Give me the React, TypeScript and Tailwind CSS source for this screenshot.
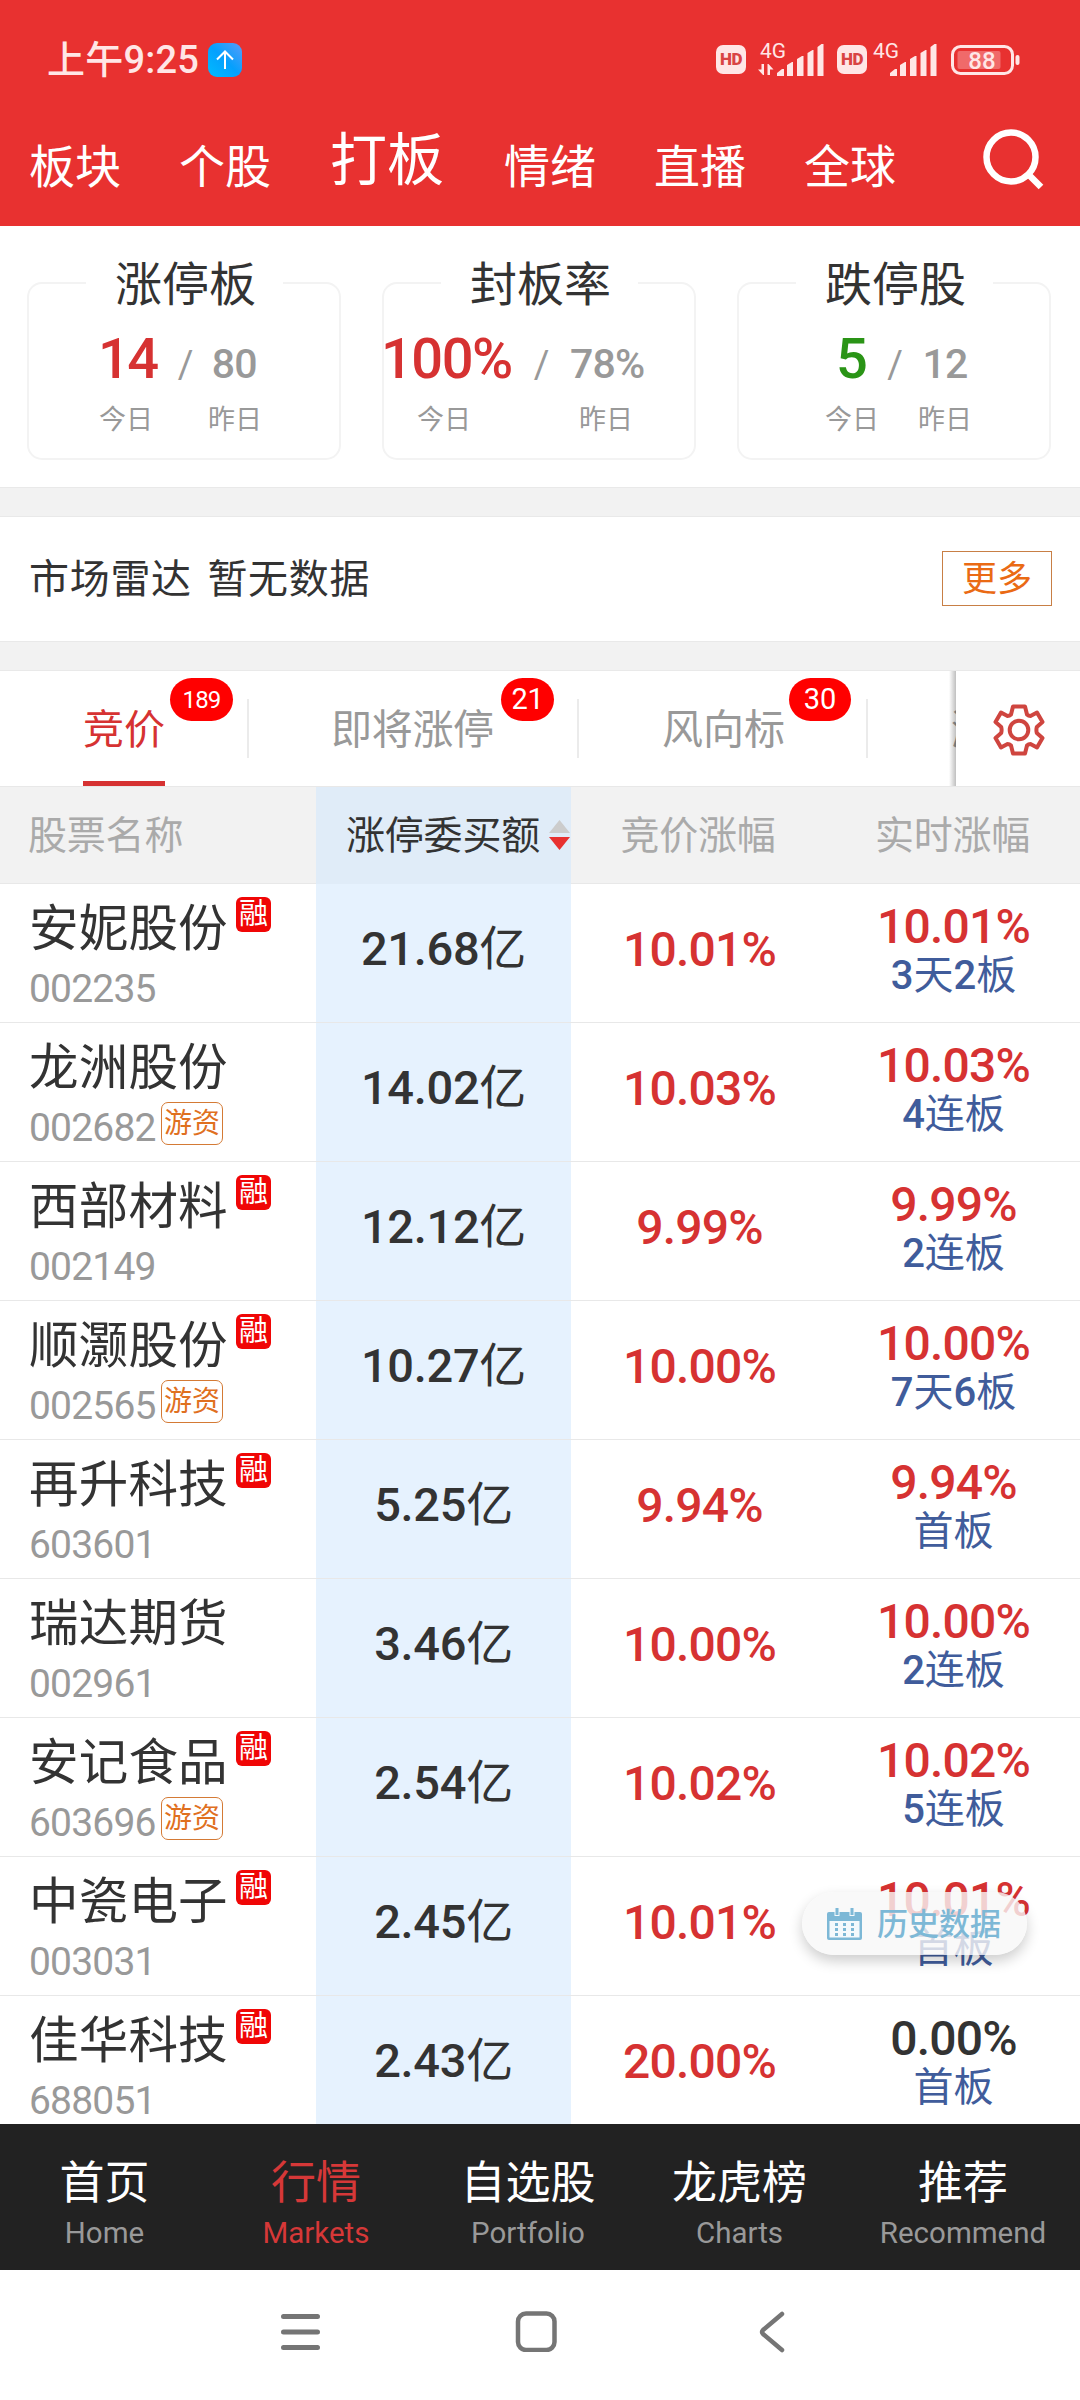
import clsx from 'clsx';

interface Stock {
  name: string;
  code: string;
  margin?: boolean;
  hotMoney?: boolean;
  amount: string;
  auction: string;
  realtime: string;
  flat?: boolean;
  streak: string;
}

const stocks: Stock[] = [
  { name: '安妮股份', code: '002235', margin: true, amount: '21.68亿', auction: '10.01%', realtime: '10.01%', streak: '3天2板' },
  { name: '龙洲股份', code: '002682', hotMoney: true, amount: '14.02亿', auction: '10.03%', realtime: '10.03%', streak: '4连板' },
  { name: '西部材料', code: '002149', margin: true, amount: '12.12亿', auction: '9.99%', realtime: '9.99%', streak: '2连板' },
  { name: '顺灏股份', code: '002565', margin: true, hotMoney: true, amount: '10.27亿', auction: '10.00%', realtime: '10.00%', streak: '7天6板' },
  { name: '再升科技', code: '603601', margin: true, amount: '5.25亿', auction: '9.94%', realtime: '9.94%', streak: '首板' },
  { name: '瑞达期货', code: '002961', amount: '3.46亿', auction: '10.00%', realtime: '10.00%', streak: '2连板' },
  { name: '安记食品', code: '603696', margin: true, hotMoney: true, amount: '2.54亿', auction: '10.02%', realtime: '10.02%', streak: '5连板' },
  { name: '中瓷电子', code: '003031', margin: true, amount: '2.45亿', auction: '10.01%', realtime: '10.01%', streak: '首板' },
  { name: '佳华科技', code: '688051', margin: true, amount: '2.43亿', auction: '20.00%', realtime: '0.00%', flat: true, streak: '首板' },
];

const navItems = [
  { label: '首页', sub: 'Home', width: 'w-[209px]' },
  { label: '行情', sub: 'Markets', width: 'w-[214px]', active: true },
  { label: '自选股', sub: 'Portfolio', width: 'w-[210px]' },
  { label: '龙虎榜', sub: 'Charts', width: 'w-[213px]' },
  { label: '推荐', sub: 'Recommend', width: 'w-[234px]' },
];

// digits are medium, hanzi stay regular
function Mixed({ text }: { text: string }) {
  return (
    <>
      {text.split(/([\d.%]+)/).filter(Boolean).map((part, i) => (
        <span key={i} className={/^[\d.%]/.test(part) ? 'font-medium' : 'font-normal'}>
          {part}
        </span>
      ))}
    </>
  );
}

function Signal({ arrows }: { arrows?: boolean }) {
  return (
    <svg className="w-[66px] h-[36px] overflow-visible" viewBox="0 0 66 36" fill="#ffe6e6">
      <text x="0" y="18" fontSize="21" textLength="26" lengthAdjust="spacingAndGlyphs">4G</text>
      {arrows && <path d="M-2 29.500h3.500V24H4v11H3zM7.500 24h1l5 5.500H10V35H7.500z" />}
      <path d="M17 36v-3l5-4h2v7zM27 36V25l5-3h1v14zM37 36V19l5-3h1.500v20zM47.500 36V13l5-3h1v26zM57.500 36V7l4-3h2v32z" />
    </svg>
  );
}

function Hd() {
  return (
    <div className="w-[30px] h-[29px] rounded-[7px] bg-[#ffe6e6] flex items-center justify-center text-[#d94444] text-[17px] font-black leading-none tracking-[-0.5px]">
      HD
    </div>
  );
}

function StatusBar() {
  return (
    <div className="h-[118px] flex items-start">
      <div className="flex items-center h-[38px] mt-[41px] ml-[47px] text-[#ffe6e6]">
        <span className="text-[38px] leading-none font-medium tracking-[0.2px] w-[161px] whitespace-nowrap">上午9:25</span>
        <svg className="w-[34px] h-[34px]" viewBox="0 0 34 34">
          <defs>
            <linearGradient id="up" x1="0" y1="1" x2="1" y2="0">
              <stop offset="0" stopColor="#00bcff" />
              <stop offset="0.5" stopColor="#05a0fd" />
              <stop offset="1" stopColor="#5a9cf8" />
            </linearGradient>
          </defs>
          <rect width="34" height="34" rx="9" fill="url(#up)" />
          <path d="M17 26V9M9 16.500l8-8 8 8" fill="none" stroke="#fff" strokeWidth="2" />
        </svg>
      </div>
      <div className="flex items-start ml-auto mr-[60px] mt-[40px]">
        <div className="pt-[5px]"><Hd /></div>
        <div className="ml-[14px]"><Signal arrows /></div>
        <div className="ml-[11px] pt-[5px]"><Hd /></div>
        <div className="ml-[6px]"><Signal /></div>
        <svg className="w-[69px] h-[30px] mt-[5px] ml-[12px]" viewBox="0 0 69 30">
          <rect x="1.500" y="1.500" width="60" height="27" rx="8" fill="none" stroke="#ffe6e6" strokeWidth="3" />
          <rect x="6.500" y="6" width="43" height="18" rx="2" fill="#f06a6a" />
          <rect x="64.500" y="10" width="4" height="10" rx="2" fill="#ffe6e6" />
          <text x="31" y="24" textAnchor="middle" fontSize="24" fontWeight="500" fill="#ffe6e6">88</text>
        </svg>
      </div>
    </div>
  );
}

function TopTabs() {
  return (
    <div className="h-[108px] flex items-start pl-[29px] text-white text-[46px] leading-[46px] whitespace-nowrap">
      <span className="w-[150px] pt-[26px]">板块</span>
      <span className="w-[151px] pt-[26px]">个股</span>
      <span className="w-[174px] pt-[14px] text-[57px] leading-[57px]">打板</span>
      <span className="w-[150px] pt-[26px]">情绪</span>
      <span className="w-[150px] pt-[26px]">直播</span>
      <span className="w-[178px] pt-[26px]">全球</span>
      <svg className="w-[62px] h-[62px] mt-[10px]" viewBox="0 0 62 62" fill="none" stroke="#fff" strokeWidth="6.500">
        <circle cx="29" cy="29" r="24.500" />
        <path d="M46.500 46.500L59 59" />
      </svg>
    </div>
  );
}

interface SummaryProps {
  title: string;
  today: string;
  yesterday: string;
  down?: boolean;
  layout: string;
  labels: string;
}

function SummaryCard({ title, today, yesterday, down, layout, labels }: SummaryProps) {
  return (
    <div className="w-[314px] h-[178px] border-2 border-[#f3f3f3] rounded-[15px] shrink-0">
      <div className="w-[197px] h-[50px] -mt-[24px] mx-auto pl-[3px] bg-white text-center text-[47px] leading-[50px] text-[#333] whitespace-nowrap">
        {title}
      </div>
      <div className={clsx('flex items-baseline mt-[21px] h-[56px] leading-[56px] whitespace-nowrap text-[#999]', layout)}>
        <span className={clsx('text-[56px] font-medium', down ? 'text-[#2a9416]' : 'text-[#d63232]')}>{today}</span>
        <span className="text-[38px]">/</span>
        <span className="text-[41px] font-medium tracking-[-0.8px]">{yesterday}</span>
      </div>
      <div className={clsx('flex mt-[17px] text-[27px] leading-[32px] text-[#999]', labels)}>
        <span>今日</span>
        <span>昨日</span>
      </div>
    </div>
  );
}

function Badge({ count, className }: { count: string; className: string }) {
  return (
    <span className={clsx('absolute top-[7px] h-[43px] rounded-full bg-[#f00] text-white flex items-center justify-center leading-none', className)}>
      {count}
    </span>
  );
}

function CategoryTabs() {
  return (
    <div className="flex h-[115px] text-[41px] text-[#999] whitespace-nowrap bg-white">
      <div className="relative w-[247px] pl-[83px] shrink-0">
        <div className="w-[82px] h-[115px] leading-[118px] border-b-[5px] border-[#d63232] text-[#d63232]">竞价</div>
        <Badge count="189" className="left-[170px] w-[63px] text-[24px] tracking-[-0.8px]" />
      </div>
      <div className="relative w-[330px] pl-[84px] leading-[118px] tracking-[-0.3px] shrink-0">
        <span className="absolute left-0 top-[28px] w-[2px] h-[59px] bg-[#ebebeb]" />
        即将涨停
        <Badge count="21" className="left-[254px] w-[53px] text-[29px]" />
      </div>
      <div className="relative w-[289px] pl-[85px] leading-[118px] shrink-0">
        <span className="absolute left-0 top-[28px] w-[2px] h-[59px] bg-[#ebebeb]" />
        风向标
        <Badge count="30" className="left-[212px] w-[62px] text-[29px]" />
      </div>
      <div className="relative w-[90px] pl-[85px] leading-[118px] overflow-hidden shrink-0">
        <span className="absolute left-0 top-[28px] w-[2px] h-[59px] bg-[#ebebeb]" />
        涨
        <span className="absolute right-0 top-0 w-[7px] h-full bg-gradient-to-r from-transparent to-black/25" />
      </div>
      <div className="w-[124px] flex items-center justify-center">
        <svg className="w-[54px] h-[54px] mt-[3px] ml-[2px]" viewBox="-27 -27 54 54" fill="none" stroke="#cf453f" strokeWidth="4" strokeLinejoin="round">
          <path d="M-6-23.500H6L8-15.500Q9.500-14 11.500-14L18-17.500L23.500-8L17.800-3Q17 0 17.800 3L23.500 8L18 17.500L11.500 14Q9.500 14 8 15.500L6 23.500H-6L-8 15.500Q-9.500 14-11.500 14L-18 17.500L-23.500 8L-17.800 3Q-17 0-17.800-3L-23.500-8L-18-17.500L-11.500-14Q-9.500-14-8-15.500z" />
          <circle r="9.300" />
        </svg>
      </div>
    </div>
  );
}

function TableHead() {
  return (
    <div className="grid grid-cols-[316px_255px_258px_251px] h-[98px] bg-[#f2f2f2] border-y border-[#e8e8e8] text-[39px] leading-[98px] tracking-[-0.2px] text-[#aaa] whitespace-nowrap">
      <div className="pl-[28px]">股票名称</div>
      <div className="bg-[#e0ecf8] text-[#333] flex items-center pl-[30px]">
        涨停委买额
        <svg className="w-[21px] h-[30px] ml-[9px] mt-[-2px] shrink-0" viewBox="0 0 21 30">
          <path d="M10.500 0L21 13H0z" fill="#ccc" />
          <path d="M10.500 30L21 17H0z" fill="#e83130" />
        </svg>
      </div>
      <div className="text-center pr-[4px]">竞价涨幅</div>
      <div className="text-center pr-[4px]">实时涨幅</div>
    </div>
  );
}

function StockRow({ stock }: { stock: Stock }) {
  return (
    <div className="grid grid-cols-[316px_255px_258px_251px] h-[139px] border-b border-[#e8e8e8] whitespace-nowrap">
      <div className="pl-[29px]">
        <div className="flex items-start h-[84px] pt-[13px]">
          <span className="w-[196px] mt-[7px] text-[49.5px] leading-[50px] tracking-[0.2px] text-[#333]">{stock.name}</span>
          {stock.margin && (
            <span className="ml-[11px] w-[35px] h-[35px] rounded-[6px] bg-[#f00606] text-white text-[29px] leading-[35px] text-center">融</span>
          )}
        </div>
        <div className="flex items-start">
          <span className="w-[132px] text-[39px] leading-[42px] text-[#999] tracking-[-0.8px]">{stock.code}</span>
          {stock.hotMoney && (
            <span className="-mt-[5px] w-[62px] h-[43px] rounded-[7px] border border-[#d47a35] text-[#e0701f] text-[28px] leading-[42px] text-center">游资</span>
          )}
        </div>
      </div>
      <div className="bg-[#e6f2fe] text-center text-[47px] leading-[130px] text-[#333] tracking-[-0.3px]">
        <Mixed text={stock.amount} />
      </div>
      <div className="text-center text-[48px] leading-[131px] font-medium tracking-[-0.8px] text-[#d63232] pr-px">{stock.auction}</div>
      <div className="text-center pt-[17px] pr-[2px]">
        <div className={clsx('text-[48px] leading-[52px] font-medium tracking-[-0.8px]', stock.flat ? 'text-[#333]' : 'text-[#d63232]')}>{stock.realtime}</div>
        <div className="mt-px text-[40px] leading-[44px] text-[#405c9b]">
          <Mixed text={stock.streak} />
        </div>
      </div>
    </div>
  );
}

function HistoryButton() {
  return (
    <button className="absolute left-[802px] top-[1892px] w-[225px] h-[63px] rounded-full bg-[#f8f8f8]/80 shadow-[0_6px_14px_rgba(0,0,0,0.2)] flex items-center pl-[25px] text-[#7db8d6] text-[31px] leading-[33px] font-medium whitespace-nowrap">
      <svg className="w-[35px] h-[32px] mr-[15px]" viewBox="0 0 35 32">
        <path d="M2 4h31a2 2 0 0 1 2 2v24a2 2 0 0 1-2 2H2a2 2 0 0 1-2-2V6a2 2 0 0 1 2-2z" fill="#7db8d6" />
        <path d="M2.500 13h30v16.500h-30z" fill="#f4f9fc" />
        <path d="M7.500 0h5v8h-5zM22.500 0h5v8h-5z" fill="#f4f9fc" />
        <path d="M8.500 0h3v7h-3zM23.500 0h3v7h-3z" fill="#7db8d6" />
        <path d="M8 16.500h19M8 21.500h19M8 26.500h19" stroke="#7db8d6" strokeWidth="3" strokeDasharray="3 5" />
      </svg>
      <span className="pt-[2px]">历史数据</span>
    </button>
  );
}

function BottomNav() {
  return (
    <nav className="flex h-[146px] bg-[#222] whitespace-nowrap">
      {navItems.map((item) => (
        <div key={item.label} className={clsx('flex flex-col items-center pt-[35px] shrink-0', item.width, item.active ? 'text-[#d63838]' : 'text-white')}>
          <span className="text-[45px] leading-[50px]">{item.label}</span>
          <span className={clsx('mt-[8px] text-[29.5px] leading-[32px]', !item.active && 'text-[#999]')}>{item.sub}</span>
        </div>
      ))}
    </nav>
  );
}

function SystemNav() {
  return (
    <div className="flex items-start h-[130px] bg-white pl-[280px] pt-[40px]">
      <svg className="w-[42px] h-[42px]" viewBox="0 0 42 42" stroke="#757575" strokeWidth="5" strokeLinecap="round">
        <path d="M3.500 6.500h34M3.500 22h34M3.500 37.500h34" />
      </svg>
      <svg className="w-[42px] h-[42px] ml-[193px]" viewBox="0 0 42 42" fill="none" stroke="#757575" strokeWidth="4.500">
        <rect x="3" y="3.500" width="36.500" height="36.500" rx="8" />
      </svg>
      <svg className="w-[30px] h-[44px] ml-[200px]" viewBox="0 0 30 44" fill="none" stroke="#757575" strokeWidth="4.500" strokeLinecap="round" strokeLinejoin="round">
        <path d="M25 4L6 20q-2 2 0 4l19 16" />
      </svg>
    </div>
  );
}

export default function App() {
  return (
    <div className="relative w-[1080px] h-[2400px] overflow-hidden bg-white font-[Roboto,'Noto_Sans_CJK_SC',sans-serif]">
      <header className="bg-[#e83130]">
        <StatusBar />
        <TopTabs />
      </header>

      <section className="flex gap-[41px] h-[261px] pt-[56px] pl-[27px]">
        <SummaryCard title="涨停板" today="14" yesterday="80" layout="pl-[69px] gap-[21px] tracking-[-2.5px]" labels="pl-[70px] gap-[55px]" />
        <SummaryCard title="封板率" today="100%" yesterday="78%" layout="-ml-[3px] gap-[22px] tracking-[-1.5px]" labels="pl-[33px] gap-[108px]" />
        <SummaryCard title="跌停股" today="5" yesterday="12" down layout="pl-[97px] gap-[21px] tracking-[-1.5px]" labels="pl-[86px] gap-[39px]" />
      </section>

      <div className="h-[30px] bg-[#f2f2f2] border-y border-[#e9e9e9]" />

      <section className="h-[124px] flex items-center justify-between pl-[29px] pr-[28px]">
        <span className="text-[40px] leading-none text-[#333] tracking-[0.7px] [word-spacing:5px] pt-[2px]">市场雷达 暂无数据</span>
        <button className="w-[110px] h-[55px] -mt-px border border-[#c87f45] text-[#ea6a14] text-[35px] leading-[55px]">更多</button>
      </section>

      <div className="h-[30px] bg-[#f2f2f2] border-y border-[#e9e9e9]" />

      <CategoryTabs />
      <TableHead />
      <div className="h-[1240px] overflow-hidden">
        {stocks.map((stock) => (
          <StockRow key={stock.code} stock={stock} />
        ))}
      </div>

      <BottomNav />
      <SystemNav />
      <HistoryButton />
    </div>
  );
}
